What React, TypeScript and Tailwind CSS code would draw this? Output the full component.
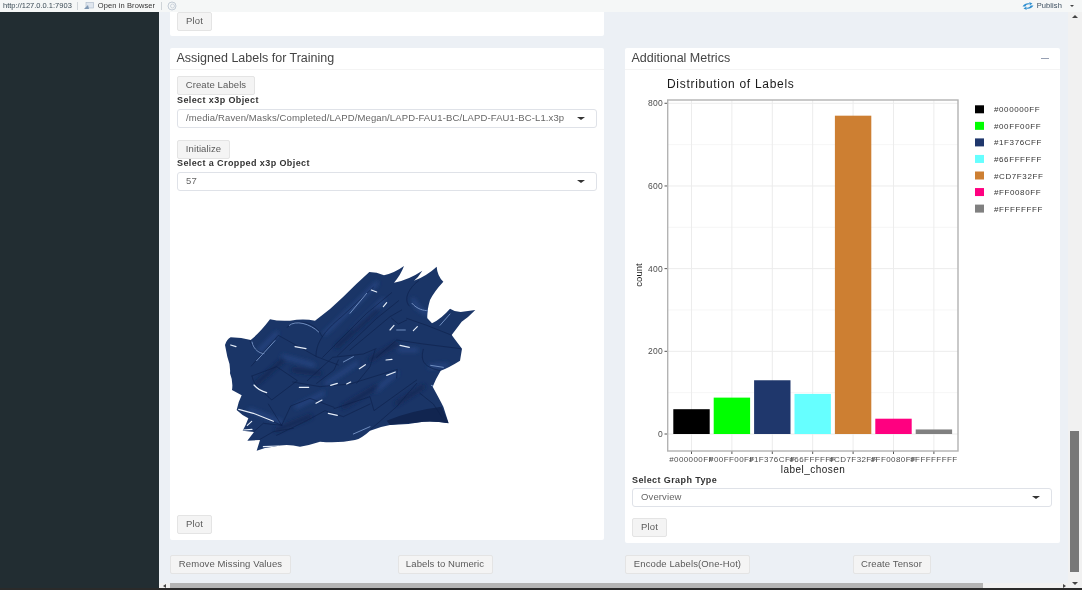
import React from "react";

const font = "[font-family:'Liberation_Sans',Arial,sans-serif]";

function Btn({ children, className = "" }: { children: React.ReactNode; className?: string }) {
  return (
    <button className={`h-[19px] rounded-[2px] border border-[#e4e4e4] bg-[#f4f4f4] text-[9.5px] tracking-[0.1px] text-[#5a5a5a] flex items-center justify-center ${className}`}>
      {children}
    </button>
  );
}

function Label({ children }: { children: React.ReactNode }) {
  return <div className="text-[9px] font-bold leading-[11px] tracking-[0.4px] text-[#333]">{children}</div>;
}

function Select({ value, className = "" }: { value: string; className?: string }) {
  return (
    <div className={`h-[19px] rounded-[3px] border border-[#dfe2e8] bg-white pl-[8px] pr-[11px] flex items-center justify-between text-[9.5px] tracking-[0.12px] text-[#666] ${className}`}>
      <span>{value}</span>
      <span className="w-0 h-0 border-l-[4px] border-r-[4px] border-t-[3px] border-l-transparent border-r-transparent border-t-[#333]" />
    </div>
  );
}

function CardHeader({ title, collapse }: { title: string; collapse?: boolean }) {
  return (
    <div className="h-[22px] border-b border-[#f4f4f4] flex items-center justify-between pl-[6.5px] pr-[11px]">
      <span className="text-[12.5px] text-[#444]">{title}</span>
      {collapse && <span className="w-[8px] h-[1px] bg-[#97a0b3]" />}
    </div>
  );
}

const outline =
  "M45 285 Q50 268 62 262 Q95 262 122 270 Q150 248 180 208 Q205 214 240 212 Q280 205 315 212 Q360 180 400 140 Q440 100 478 66 Q500 66 522 76 Q555 68 582 48 Q572 75 552 98 Q595 90 637 62 Q625 82 612 92 Q650 78 680 50 Q682 78 700 95 Q672 125 660 150 Q650 185 652 205 L666 220 Q695 205 720 176 Q735 186 752 186 L796 180 Q775 202 755 215 Q740 235 725 255 Q742 278 756 296 L750 332 Q718 352 692 362 Q678 385 668 410 Q690 450 700 470 L716 520 Q675 512 640 515 Q590 525 540 525 Q510 530 480 542 Q455 565 435 570 Q385 580 330 575 Q300 585 270 590 Q230 580 190 590 Q165 592 140 602 L150 570 L112 572 L132 546 L98 542 Q108 525 115 505 Q95 495 80 480 Q85 455 95 436 L66 420 Q70 395 60 370 Q62 345 52 320 Z";

function Blob() {
  return (
    <svg viewBox="0 0 840 630" className="w-[280px] h-[210px] block" aria-hidden="true">
      <defs>
        <clipPath id="blobClip">
          <path d={outline} />
        </clipPath>
        <filter id="soft3" x="-20%" y="-20%" width="140%" height="140%">
          <feGaussianBlur stdDeviation="6" />
        </filter>
        <filter id="soft1" x="-20%" y="-20%" width="140%" height="140%">
          <feGaussianBlur stdDeviation="1.6" />
        </filter>
      </defs>
      <path fill="#1a3567" d={outline} />
      <g clipPath="url(#blobClip)">
        <g filter="url(#soft3)" fill="none" strokeLinecap="round">
          <g stroke="#254581" strokeWidth="12">
            <path d="M345 250 L450 150 L500 100" />
            <path d="M430 240 L520 150" />
            <path d="M610 150 C620 175 640 190 660 190" />
            <path d="M150 300 L200 250" />
            <path d="M220 320 L310 345" />
            <path d="M120 480 L210 515" />
            <path d="M350 400 L440 340" />
            <path d="M500 420 L560 370" />
            <path d="M260 470 L340 430" />
            <path d="M660 350 L710 345" />
            <path d="M570 300 L620 300" />
          </g>
          <g stroke="#122652" strokeWidth="12">
            <path d="M380 290 L500 180" />
            <path d="M250 360 L330 370" />
            <path d="M140 400 L220 330" />
            <path d="M400 470 L500 410" />
            <path d="M200 540 L300 500" />
            <path d="M560 460 L640 410" />
            <path d="M480 330 L560 280" />
          </g>
        </g>
        <path fill="#112550" d="M530 512 Q600 482 695 470 L716 520 Q640 512 540 525 Z" />
        <g fill="none" stroke="#0e2049" strokeWidth="1.8" strokeLinecap="round" strokeLinejoin="round">
          <path d="M318 318 C318 280 340 245 395 200 L490 112" />
          <path d="M338 322 L470 190 L545 128" />
          <path d="M382 318 L500 205 L566 152" />
          <path d="M420 300 L540 200 L575 180" />
          <path d="M232 232 C250 205 318 212 335 258" />
          <path d="M124 348 L205 256 L320 320 L385 345" />
          <path d="M126 378 C130 410 165 428 185 450 L262 392 L200 350 L126 378" />
          <path d="M292 392 L368 322 L460 312 L498 296" />
          <path d="M175 462 L215 526 L242 468 L300 445 L372 472" />
          <path d="M84 480 L130 490 L215 526" />
          <path d="M248 396 L330 410 L420 402 L562 358 L560 384" />
          <path d="M372 476 L480 440 L492 482 L620 390" />
          <path d="M598 168 C578 148 598 112 626 92" />
          <path d="M640 298 C628 340 650 352 690 362" />
          <path d="M630 430 L670 462 L696 502" />
          <path d="M500 322 L560 270 L640 282 L752 296" />
          <path d="M590 205 L650 226 L726 256" />
          <path d="M120 272 C126 296 146 306 166 310" />
          <path d="M200 556 L290 512 L345 482 L400 500 L480 462" />
          <path d="M130 546 L160 520 L215 526" />
          <path d="M440 400 L480 350 L495 300" />
          <path d="M320 400 L372 360 L385 330" />
          <path d="M545 205 L565 222 L590 210" />
          <path d="M480 540 L560 470 L620 400" />
          <path d="M150 568 L190 545 L250 535" />
        </g>
        <g filter="url(#soft1)" fill="none" strokeLinecap="round">
          <g stroke="#e6eef9" strokeWidth="3.5">
            <path d="M86 478 L130 490 L190 514" />
            <path d="M132 405 C145 420 158 425 170 428" />
            <path d="M255 290 L288 296" />
            <path d="M530 376 L556 366" />
            <path d="M448 356 L466 344" />
            <path d="M268 412 L296 412" />
            <path d="M362 406 L382 400" />
            <path d="M484 120 L500 126" />
            <path d="M570 286 L598 292" />
            <path d="M520 170 L530 158" />
            <path d="M318 460 L336 450" />
            <path d="M355 490 L382 496" />
            <path d="M112 526 L125 514" />
            <path d="M62 285 L78 290" />
            <path d="M610 242 L622 230" />
            <path d="M100 540 L126 538" />
            <path d="M160 590 L206 588" />
            <path d="M528 330 L546 328" />
            <path d="M540 240 L552 226" />
            <path d="M410 402 L422 396" />
          </g>
          <g stroke="#6f8dbf" strokeWidth="3">
            <path d="M126 276 C130 300 150 310 162 311" />
            <path d="M238 226 C256 210 300 220 326 246" />
            <path d="M400 336 L430 320" />
            <path d="M606 160 C622 178 640 182 654 182" />
            <path d="M690 226 L720 192" />
            <path d="M430 552 L480 530" />
            <path d="M560 240 L586 240" />
            <path d="M662 346 L700 352" />
            <path d="M664 406 L696 418" />
            <path d="M470 130 L420 190" />
            <path d="M140 332 L195 272" />
          </g>
        </g>
      </g>
    </svg>
  );
}

const bars = [
  { c: "#000000", l: "#000000FF", v: 60 },
  { c: "#00FF00", l: "#00FF00FF", v: 88 },
  { c: "#1F376C", l: "#1F376CFF", v: 130 },
  { c: "#66FFFF", l: "#66FFFFFF", v: 97 },
  { c: "#CD7F32", l: "#CD7F32FF", v: 770 },
  { c: "#FF0080", l: "#FF0080FF", v: 37 },
  { c: "#808080", l: "#FFFFFFFF", v: 11 },
];

function Chart() {
  // The svg sits at page (625, 70).
  const ox = 625;
  const oy = 70;
  const k = 0.4134;
  const y = (v: number) => 434 - v * k - oy;
  const cx = (i: number) => 691.5 + i * 40.4 - ox;
  return (
    <svg viewBox="0 0 434 404" className="w-[434px] h-[404px] block overflow-visible" style={{ fontFamily: "'Liberation Sans', Arial, sans-serif" }}>
      <text x={42} y={18} fontSize="12" letterSpacing="0.7" fill="#1a1a1a">Distribution of Labels</text>
      {[100, 300, 500, 700].map((v) => (
        <line key={v} x1={43} x2={333} y1={y(v)} y2={y(v)} stroke="#f6f6f6" strokeWidth="1" />
      ))}
      {[0, 200, 400, 600, 800].map((v) => (
        <g key={v}>
          <line x1={43} x2={333} y1={y(v)} y2={y(v)} stroke="#ececec" strokeWidth="1" />
          <line x1={39.5} x2={43} y1={y(v)} y2={y(v)} stroke="#555" strokeWidth="1" />
          <text x={38} y={y(v) + 3} textAnchor="end" fontSize="8.5" letterSpacing="0.3" fill="#4d4d4d">{v}</text>
        </g>
      ))}
      {bars.map((b, i) => (
        <g key={b.l}>
          <line x1={cx(i)} x2={cx(i)} y1={30} y2={381} stroke="#ececec" strokeWidth="1" />
          <rect x={cx(i) - 18.2} y={y(b.v)} width={36.4} height={b.v * k} fill={b.c} />
          <line x1={cx(i)} x2={cx(i)} y1={381} y2={384} stroke="#555" strokeWidth="1" />
          <text x={cx(i)} y={391.5} textAnchor="middle" fontSize="8" letterSpacing="0.42" fill="#4d4d4d">{b.l}</text>
        </g>
      ))}
      <rect x={42.7} y={30} width={290.3} height={351} fill="none" stroke="#b3b3b3" strokeWidth="1.4" />
      <text x={188} y={403} textAnchor="middle" fontSize="10" letterSpacing="0.45" fill="#1a1a1a">label_chosen</text>
      <text transform="translate(17 205) rotate(-90)" textAnchor="middle" fontSize="9.5" fill="#1a1a1a">count</text>
      {bars.map((b, i) => (
        <g key={b.l + "leg"}>
          <rect x={350} y={35.3 + i * 16.55} width={9} height={8} fill={b.c} />
          <text x={369} y={42.3 + i * 16.55} fontSize="8" letterSpacing="0.6" fill="#333">{b.l}</text>
        </g>
      ))}
    </svg>
  );
}

export default function App() {
  return (
    <div className={`w-[1082px] h-[590px] overflow-hidden flex flex-col bg-[#ecf0f5] blur-[0.3px] ${font}`}>
      {/* viewer top bar */}
      <div className="h-[12px] shrink-0 bg-[#f5f7f7] flex items-center text-[7.5px] text-[#333] pl-[3px] pr-[8px]">
        <span className="text-[#3a4a55]">http://127.0.0.1:7903</span>
        <span className="ml-[5px] h-[8px] w-px bg-[#cfd4d8]" />
        <svg viewBox="0 0 10 8" className="ml-[6px] w-[10px] h-[8px]" aria-hidden="true">
          <rect x="2" y="0.5" width="7.5" height="5.5" fill="#dfe6ee" stroke="#a9b8c8" strokeWidth="0.6" />
          <path d="M0 7 L4 3 L5 7 Z" fill="#7f98b3" />
        </svg>
        <span className="ml-[4px] tracking-[0.1px]">Open in Browser</span>
        <span className="ml-[6px] h-[8px] w-px bg-[#cfd4d8]" />
        <svg viewBox="0 0 10 10" className="ml-[5px] w-[10px] h-[10px]" aria-hidden="true">
          <circle cx="5" cy="5" r="4" fill="none" stroke="#c3ccd6" strokeWidth="1" />
          <circle cx="5.5" cy="5" r="2" fill="none" stroke="#c3ccd6" strokeWidth="0.8" />
        </svg>
        <div className="ml-auto flex items-center">
          <svg viewBox="0 0 12 8" className="w-[12px] h-[8px]" aria-hidden="true">
            <path d="M0.5 4.5 C2.5 1.5 5 0.8 8 1.5 L7 0 L10.5 1.6 L7.5 3.4 L8 2.4 C5.5 2 4 3 3.5 4.5 Z" fill="#2f8fd0" />
            <path d="M11.5 3.5 C9.5 6.5 7 7.2 4 6.5 L5 8 L1.5 6.4 L4.5 4.6 L4 5.6 C6.5 6 8 5 8.5 3.5 Z" fill="#2f8fd0" />
          </svg>
          <span className="ml-[3px] tracking-[0.1px] text-[#3d4f60]">Publish</span>
          <span className="ml-[8px] w-0 h-0 border-l-[2.5px] border-r-[2.5px] border-t-[2.5px] border-l-transparent border-r-transparent border-t-[#444]" />
        </div>
      </div>

      <div className="flex-1 min-h-0 flex">
        <div className="w-[159px] shrink-0 bg-[#222d32]" />

        <div className="flex-1 min-w-0 flex flex-col">
          {/* scrollable page */}
          <div className="flex-1 min-h-0 overflow-hidden pl-[11px]">
            <div className="w-[434px] h-[24px] bg-white rounded-b-[2px] pl-[7px]">
              <Btn className="w-[35px]">Plot</Btn>
            </div>

            <div className="mt-[12px] flex items-start gap-[21px] w-[890px]">
              <section className="w-[434px] h-[492px] bg-white rounded-[2px] flex flex-col">
                <CardHeader title="Assigned Labels for Training" />
                <div className="flex-1 flex flex-col px-[7px] pt-[6px] pb-[6px]">
                  <Btn className="w-[78px]">Create Labels</Btn>
                  <Label>Select x3p Object</Label>
                  <Select className="mt-[3px]" value="/media/Raven/Masks/Completed/LAPD/Megan/LAPD-FAU1-BC/LAPD-FAU1-BC-L1.x3p" />
                  <Btn className="w-[53px] mt-[12px]">Initialize</Btn>
                  <div className="-mt-[1px]"><Label>Select a Cropped x3p Object</Label></div>
                  <Select className="mt-[3px]" value="57" />
                  <div className="flex-1 pl-[33px] pt-[59px]">
                    <Blob />
                  </div>
                  <Btn className="w-[35px]">Plot</Btn>
                </div>
              </section>

              <section className="w-[435px] h-[495px] bg-white rounded-[2px] flex flex-col">
                <CardHeader title="Additional Metrics" collapse />
                <Chart />
                <div className="px-[7px]">
                  <div className="mt-[1px]"><Label>Select Graph Type</Label></div>
                  <Select className="mt-[2px] w-[420px]" value="Overview" />
                  <Btn className="w-[35px] mt-[11px]">Plot</Btn>
                </div>
              </section>
            </div>

            <div className="mt-[12px] w-[910px] grid grid-cols-4">
              <Btn className="w-[121px]">Remove Missing Values</Btn>
              <Btn className="w-[95px]">Labels to Numeric</Btn>
              <Btn className="w-[125px]">Encode Labels(One-Hot)</Btn>
              <Btn className="w-[78px]">Create Tensor</Btn>
            </div>
          </div>

          {/* horizontal scrollbar */}
          <div className="h-[5px] shrink-0 bg-[#f1f1f1] flex items-center justify-between pl-[4px] pr-[2px]">
            <span className="w-0 h-0 border-t-[2px] border-b-[2px] border-r-[3px] border-t-transparent border-b-transparent border-r-[#444]" />
            <div className="ml-[4px] mr-[80px] flex-1 h-[5px] bg-[#b4b4b4]" />
            <span className="w-0 h-0 border-t-[2px] border-b-[2px] border-l-[3px] border-t-transparent border-b-transparent border-l-[#444]" />
          </div>
        </div>

        {/* vertical scrollbar */}
        <div className="w-[14px] shrink-0 bg-[#f1f1f1] flex flex-col items-center pr-[1px]">
          <span className="mt-[3px] w-0 h-0 border-l-[3px] border-r-[3px] border-b-[3px] border-l-transparent border-r-transparent border-b-[#444]" />
          <div className="mt-auto w-[9px] h-[141px] bg-[#787878]" />
          <span className="mt-[10px] mb-[3px] w-0 h-0 border-l-[3px] border-r-[3px] border-t-[3px] border-l-transparent border-r-transparent border-t-[#444]" />
        </div>
      </div>
      <div className="h-[2px] shrink-0 bg-[#2a2a2a]" />
    </div>
  );
}
